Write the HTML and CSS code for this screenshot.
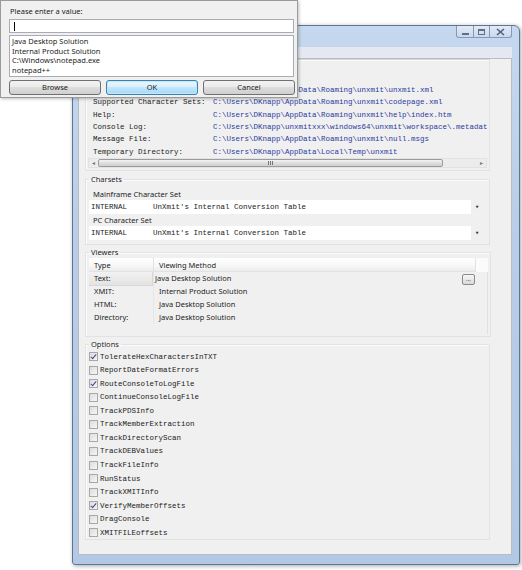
FILE: index.html
```html
<!DOCTYPE html>
<html>
<head>
<meta charset="utf-8">
<link rel="stylesheet" href="styles.css">
</head>
<body>
<div class="desktop">
  <div class="window">
    <div class="titlebar">
      <div class="caption">
        <div class="cbtn min"><span class="min-glyph"></span></div>
        <div class="cbtn max"><span class="max-glyph"></span></div>
        <div class="cbtn close">
          <svg width="9" height="8" viewBox="0 0 9 8"><path d="M1 1 L8 7 M8 1 L1 7" stroke="#4a5f7d" stroke-width="1.6" fill="none"/></svg>
        </div>
      </div>
    </div>
    <div class="client">
      <div class="panel">
        <fieldset class="group paths">
          <div class="scrollpane">
            <div class="path-rows mono">
              <span class="plabel">Configuration File:</span><span class="pval">C:\Users\DKnapp\AppData\Roaming\unxmit\unxmit.xml</span>
              <span class="plabel">Supported Character Sets:</span><span class="pval">C:\Users\DKnapp\AppData\Roaming\unxmit\codepage.xml</span>
              <span class="plabel">Help:</span><span class="pval">C:\Users\DKnapp\AppData\Roaming\unxmit\help\index.htm</span>
              <span class="plabel">Console Log:</span><span class="pval">C:\Users\DKnapp\unxmitxxx\windows64\unxmit\workspace\.metadata\.log</span>
              <span class="plabel">Message File:</span><span class="pval">C:\Users\DKnapp\AppData\Roaming\unxmit\null.msgs</span>
              <span class="plabel">Temporary Directory:</span><span class="pval">C:\Users\DKnapp\AppData\Local\Temp\unxmit</span>
            </div>
            <div class="hscroll">
              <span class="arrow">&#9666;</span>
              <div class="track"><div class="thumb"><span class="grip"></span></div></div>
              <span class="arrow">&#9656;</span>
            </div>
          </div>
        </fieldset>

        <fieldset class="group charsets">
          <legend>Charsets</legend>
          <div class="cs-label">Mainframe Character Set</div>
          <div class="combo mono"><div class="field"><span class="code">INTERNAL</span><span>UnXmit's Internal Conversion Table</span></div><span class="drop">&#9662;</span></div>
          <div class="cs-label second">PC Character Set</div>
          <div class="combo mono"><div class="field"><span class="code">INTERNAL</span><span>UnXmit's Internal Conversion Table</span></div><span class="drop">&#9662;</span></div>
        </fieldset>

        <fieldset class="group viewers">
          <legend>Viewers</legend>
          <div class="vtable">
            <div class="vrow head"><span class="c1">Type</span><span class="c2">Viewing Method</span><span class="c3"></span></div>
            <div class="vrow sel"><span class="c1 rowhead">Text:</span><span class="c2 editing">Java Desktop Solution</span><span class="c3"><span class="dots">...</span></span></div>
            <div class="vrow"><span class="c1">XMIT:</span><span class="c2">Internal Product Solution</span><span class="c3"></span></div>
            <div class="vrow"><span class="c1">HTML:</span><span class="c2">Java Desktop Solution</span><span class="c3"></span></div>
            <div class="vrow"><span class="c1">Directory:</span><span class="c2">Java Desktop Solution</span><span class="c3"></span></div>
          </div>
        </fieldset>

        <fieldset class="group options">
          <legend>Options</legend>
          <div class="opts mono">
            <label class="opt"><span class="cb checked"></span>TolerateHexCharactersInTXT</label>
            <label class="opt"><span class="cb"></span>ReportDateFormatErrors</label>
            <label class="opt"><span class="cb checked"></span>RouteConsoleToLogFile</label>
            <label class="opt"><span class="cb"></span>ContinueConsoleLogFile</label>
            <label class="opt"><span class="cb"></span>TrackPDSInfo</label>
            <label class="opt"><span class="cb"></span>TrackMemberExtraction</label>
            <label class="opt"><span class="cb"></span>TrackDirectoryScan</label>
            <label class="opt"><span class="cb"></span>TrackDEBValues</label>
            <label class="opt"><span class="cb"></span>TrackFileInfo</label>
            <label class="opt"><span class="cb"></span>RunStatus</label>
            <label class="opt"><span class="cb"></span>TrackXMITInfo</label>
            <label class="opt"><span class="cb checked"></span>VerifyMemberOffsets</label>
            <label class="opt"><span class="cb"></span>DragConsole</label>
            <label class="opt"><span class="cb"></span>XMITFILEoffsets</label>
          </div>
        </fieldset>
      </div>
    </div>
  </div>

  <div class="dialog">
    <div class="prompt">Please enter a value:</div>
    <div class="input"><span class="caret"></span></div>
    <div class="list">
      <div>Java Desktop Solution</div>
      <div>Internal Product Solution</div>
      <div>C:\Windows\notepad.exe</div>
      <div>notepad++</div>
    </div>
    <div class="buttons">
      <div class="btn">Browse</div>
      <div class="btn default">OK</div>
      <div class="btn">Cancel</div>
    </div>
  </div>
</div>
</body>
</html>
```
FILE: styles.css
```css
* { box-sizing: border-box; }
html, body { margin: 0; padding: 0; background: #ffffff; }
body {
  width: 522px; height: 570px; overflow: hidden;
  font-family: "Noto Sans", "Open Sans", sans-serif;
  font-size: 7.5px; color: #1c1c1c;
}
.desktop { position: relative; width: 522px; height: 570px; }
.mono { font-family: "Liberation Mono", "Courier New", monospace; font-size: 7.5px; }

/* ---------- main window ---------- */
.window {
  position: absolute; left: 72px; top: 25px;
  width: 448px; height: 540px;
  border: 1px solid #5f7591;
  border-radius: 6px 6px 3px 3px;
  background: linear-gradient(#c5d8ef, #b9cde8 40%, #b3c8e4);
  padding: 0 7px 9px 5px;
  display: flex; flex-direction: column;
  box-shadow: 1px 1px 4px rgba(0,0,0,0.35);
}
.titlebar { height: 21px; display: flex; justify-content: flex-end; align-items: flex-start; }
.caption { display: flex; }
.cbtn {
  height: 12px; border: 1px solid #8799b2; border-top: none;
  background: linear-gradient(#e2ebf6, #c9d8ec);
  display: flex; align-items: center; justify-content: center;
}
.cbtn.min { width: 18px; border-radius: 0 0 0 3px; }
.cbtn.max { width: 16px; border-left: none; }
.cbtn.close { width: 22px; border-left: none; border-radius: 0 0 3px 0; }
.min-glyph { width: 7px; height: 2px; background: #5b6f8c; margin-top: 4px; }
.max-glyph { width: 7px; height: 6px; border: 1px solid #5b6f8c; border-top-width: 2px; }

.client {
  flex: 1; background: #e4e9f1; padding-top: 11px; display: flex; flex-direction: column;
}
.panel {
  flex: 1; background: #f0f0f0; border: 1px solid #b9bcc2;
  padding: 0 21px 0 6px;
}

/* ---------- group boxes ---------- */
.group {
  margin: 0; padding: 0 2px 0 2px;
  border: 1px solid #e2e2e2;
  box-shadow: inset 1px 1px 0 #fbfbfb;
}
.group legend {
  padding: 0 2px; margin-left: 1px;
  font-size: 7.5px; line-height: 10px; color: #1c1c1c;
}
.paths { height: 112px; padding-top: 23.8px; border-top-color: #d6d6d6; }
.charsets { margin-top: 3px; height: 71px; }
.viewers { margin-top: 2px; height: 90px; }
.options { margin-top: 2px; height: 201px; }

/* paths */
.scrollpane { width: 399px; overflow: hidden; }
.path-rows {
  display: grid; grid-template-columns: 120px max-content;
  padding-left: 5px; line-height: 12.4px; white-space: nowrap;
}
.plabel { color: #222; }
.pval { color: #2d3a9e; }
.hscroll {
  height: 10px; display: flex; align-items: center;
  background: #ececec; border: 1px solid #e2e2e2;
}
.hscroll .arrow { width: 9px; font-size: 6px; line-height: 8px; color: #777; text-align: center; }
.track { flex: 1; height: 8px; }
.thumb {
  width: 345px; height: 8px; border: 1px solid #9c9c9c; border-radius: 2px;
  background: linear-gradient(#f4f4f4, #dedede 50%, #d0d0d0);
  display: flex; align-items: center; justify-content: center;
}
.grip {
  width: 5px; height: 4px; border-left: 1px solid #777; border-right: 1px solid #777;
  background: linear-gradient(90deg, transparent 1px, #777 1px, #777 2px, transparent 2px);
}

/* charsets */
.cs-label { line-height: 10px; padding-left: 5px; margin-top: 5px; }
.cs-label.second { margin-top: 1px; }
.cs-label + .combo { margin-top: 1px; }
.combo { display: flex; align-items: center; height: 14px; margin-left: 1px; }
.combo .field {
  width: 382px; height: 14px; background: #ffffff; display: flex; align-items: center;
  padding-left: 2px; white-space: nowrap; color: #222;
}
.combo .code { width: 62px; }
.combo .drop { width: 12px; text-align: center; font-size: 7px; color: #333; }

/* viewers */
.vtable { margin-top: 1px; height: 76px; border-right: 1px solid #e0e0e0; margin-left: 1px; width: 399px; }
.vrow { display: grid; grid-template-columns: 64px 322px 13px; height: 13px; line-height: 13px; }
.vrow .c1 { padding-left: 5px; }
.vrow .c2 { padding-left: 5px; border-left: 1px solid #e6e6e6; }
.vrow.head { height: 14px; line-height: 14px; background: linear-gradient(#ffffff, #f7f7f7 60%, #ececec); border-bottom: 1px solid #e2e2e2; }
.vrow.head .c2 { border-left: 1px solid #e2e2e2; }
.vrow.head .c3 { border-left: 1px solid #e2e2e2; background: #fbfbfb; }
.rowhead { background: linear-gradient(#f2f2f2, #e3e3e3); border-bottom: 1px solid #d8d8d8; border-right: 1px solid #d8d8d8; }
.vrow .c2.editing { padding-left: 1px; }
.vrow.sel .c3 { display: flex; align-items: center; justify-content: center; }
.dots {
  width: 13px; height: 11px; border: 1px solid #8a8a8a; border-radius: 2px;
  background: linear-gradient(#f7f7f7, #d9d9d9); font-size: 6px; line-height: 9px; text-align: center; color: #333;
  margin-left: -26px;
}

/* options */
.opts { padding-top: 1px; }
.opt { display: flex; align-items: center; height: 13.54px; padding-left: 1px; color: #222; }
.cb {
  width: 9px; height: 9px; border: 1px solid #a8a8a8; margin-right: 2px;
  background: linear-gradient(135deg, #dcdcdc, #f6f6f6);
  display: inline-flex; align-items: center; justify-content: center;
}
.cb.checked::after {
  content: ""; width: 2px; height: 5px; border: solid #3a4a8a; border-width: 0 1.3px 1.3px 0;
  transform: rotate(40deg); margin-top: -1px;
}

/* ---------- dialog ---------- */
.dialog {
  position: absolute; left: 0; top: 0; width: 298px; height: 98px;
  background: #f0f0f0; border: 1px solid #9b9b9b;
  box-shadow: 1px 1px 3px rgba(0,0,0,0.25);
  padding: 0 3px 0 8px;
  display: flex; flex-direction: column;
}
.prompt { line-height: 10px; margin-top: 5px; padding-left: 1px; }
.input {
  margin-top: 3px; height: 14px; background: #fff; border: 1px solid #a9acb4;
  display: flex; align-items: center; padding-left: 4px;
}
.caret { width: 1px; height: 9px; background: #000; }
.list {
  margin-top: 2px; height: 42px; background: #fff; border: 1px solid #a9acb4;
  padding: 1px 0 0 2px; line-height: 9.7px;
}
.buttons { margin-top: 3px; display: grid; grid-template-columns: 92px 92px 92px; gap: 5px; }
.btn {
  height: 15px; border: 1px solid #707070; border-radius: 3px;
  background: linear-gradient(#f2f2f2 0%, #ebebeb 45%, #dddddd 50%, #cfcfcf 100%);
  text-align: center; line-height: 13px;
}
.btn.default {
  border-color: #3c7fb1;
  background: linear-gradient(#eaf6fd 0%, #d9f0fc 45%, #bee6fd 50%, #a7d9f5 100%);
  box-shadow: inset 0 0 0 1px #c3e8fc;
}
```
